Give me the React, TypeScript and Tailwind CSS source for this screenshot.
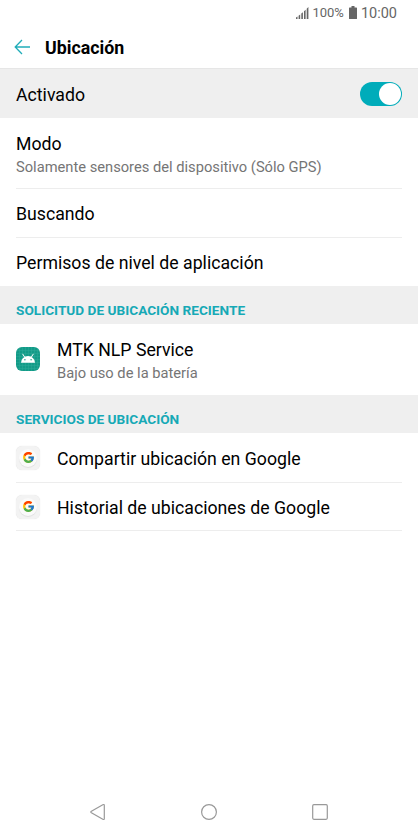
import { useState } from "react";
import type { ReactNode } from "react";
import { FcGoogle } from "react-icons/fc";

function StatusBar() {
  return (
    <div className="flex h-[26px] shrink-0 items-center justify-end pr-[21px] text-[#666]">
      <svg className="mr-[3px]" width="13" height="12" viewBox="0 0 13 12" fill="currentColor">
        <path d="M0 10.5L1.5 9.5V12H0zM2.6 8.8L4.2 7.5V12H2.6zM5.3 6.6L6.9 5.2V12H5.3zM8 4.3L9.6 2.8V12H8zM10.7 1.8L12.4 0V12H10.7z" />
      </svg>
      <span className="pb-[2px] text-[13px] leading-none">100%</span>
      <svg className="mb-px ml-[5px]" width="8" height="13" viewBox="0 0 8 13" fill="currentColor">
        <path d="M2.5 0h3v1.4H7.4a.6.6 0 0 1 .6.6v10.4a.6.6 0 0 1-.6.6H.6a.6.6 0 0 1-.6-.6V2a.6.6 0 0 1 .6-.6h1.9z" />
      </svg>
      <span className="ml-1 pt-[2px] text-[14.5px] leading-none">10:00</span>
    </div>
  );
}

function Section({ title }: { title: string }) {
  return (
    <h2 className="h-[38px] shrink-0 bg-[#efefef] px-4 pt-[14px] text-[13.65px] leading-5 font-bold text-[#16a9b6]">
      {title}
    </h2>
  );
}

type RowProps = {
  title: string;
  subtitle?: string;
  icon?: ReactNode;
  divider?: boolean;
  height?: string;
};

function Row({ title, subtitle, icon, divider, height = "h-[49px]" }: RowProps) {
  return (
    <div className={`mx-4 flex shrink-0 items-center ${height} ${divider ? "border-b border-[#ededed]" : ""}`}>
      {icon && <div className="mr-[17px] w-6">{icon}</div>}
      <div className={subtitle && !icon ? "pt-[3px]" : "pt-[2px]"}>
        <p className="text-[17.7px] leading-6 text-black">{title}</p>
        {subtitle && <p className="mt-px text-[14.7px] leading-5 text-[#757575]">{subtitle}</p>}
      </div>
    </div>
  );
}

function AndroidIcon() {
  return (
    <svg className="mb-px" width="24" height="24" viewBox="0 0 24 24">
      <rect width="24" height="24" rx="6" fill="#129b88" />
      <path
        d="M3.5 1v22M6.5 0v24M9.5 0v24M12.5 0v24M15.5 0v24M18.5 0v24M21.5 1v22M1 3.5h22M0 6.5h24M0 9.5h24M0 12.5h24M0 15.5h24M0 18.5h24M1 21.5h22"
        stroke="#3fb3a3"
        strokeWidth=".5"
        opacity=".6"
      />
      <path d="M5 15.8a7 6.8 0 0 1 14 0z" fill="#fff" />
      <path d="M6.8 7.2l1.8 2.8M17.2 7.2L15.4 10" stroke="#fff" strokeWidth="1" strokeLinecap="round" />
      <circle cx="8.9" cy="12.8" r=".7" fill="#129b88" />
      <circle cx="15.1" cy="12.8" r=".7" fill="#129b88" />
    </svg>
  );
}

function GoogleIcon() {
  return (
    <div className="flex h-6 w-6 items-center justify-center rounded-[6px] bg-[#f3f3f3] shadow-[0_0_1px_rgba(0,0,0,0.15)]">
      <div className="flex h-[18px] w-[18px] items-center justify-center rounded-full bg-[#fafafa] shadow-[0_1px_1px_rgba(0,0,0,0.08)]">
        <FcGoogle size={13} />
      </div>
    </div>
  );
}

function NavBar() {
  return (
    <nav className="mt-auto flex h-[49px] shrink-0 items-center justify-between pr-[90px] pl-[90px] text-[#999]">
      <svg width="16" height="18" viewBox="0 0 16 18" fill="none" stroke="currentColor" strokeWidth="1.2">
        <path d="M1.4 8.2L12.8 1.7q1.5-.7 1.5.9v12.8q0 1.6-1.5.9L1.4 9.8q-1.2-.8 0-1.6z" />
      </svg>
      <svg width="18" height="18" viewBox="0 0 18 18" fill="none" stroke="currentColor" strokeWidth="1.2">
        <circle cx="9" cy="9" r="7.4" />
      </svg>
      <svg width="16" height="18" viewBox="0 0 16 18" fill="none" stroke="currentColor" strokeWidth="1.2">
        <rect x=".7" y="1.7" width="14.6" height="14.6" rx="1.2" />
      </svg>
    </nav>
  );
}

export default function App() {
  const [enabled, setEnabled] = useState(true);

  return (
    <div className="flex h-screen flex-col overflow-hidden bg-white font-['Roboto',sans-serif]">
      <StatusBar />

      <header className="flex h-[43px] shrink-0 items-center border-b border-[#e6e6e6] pl-[14px]">
        <svg width="17" height="16" viewBox="0 0 17 16" fill="none" stroke="#20adb9" strokeWidth="1.3">
          <path d="M16 8H1.5M8 1L1.2 8L8 15" />
        </svg>
        <h1 className="ml-[14px] pt-px text-[17.8px] leading-6 font-bold text-black">Ubicación</h1>
      </header>

      <div className="flex h-[49px] shrink-0 items-center justify-between bg-[#efefef] px-4">
        <span className="pt-[2px] text-[17.7px] leading-6 text-black">Activado</span>
        <button
          role="switch"
          aria-checked={enabled}
          onClick={() => setEnabled(!enabled)}
          className={`flex h-6 w-[42px] items-center rounded-full p-px ${enabled ? "justify-end bg-[#00acba]" : "justify-start bg-gray-400"}`}
        >
          <span className="h-[22px] w-[22px] rounded-full bg-white" />
        </button>
      </div>

      <Row title="Modo" subtitle="Solamente sensores del dispositivo (Sólo GPS)" height="h-[71px]" divider />
      <Row title="Buscando" divider />
      <Row title="Permisos de nivel de aplicación" height="h-12" />

      <Section title="SOLICITUD DE UBICACIÓN RECIENTE" />
      <Row title="MTK NLP Service" subtitle="Bajo uso de la batería" height="h-[71px]" icon={<AndroidIcon />} />

      <Section title="SERVICIOS DE UBICACIÓN" />
      <Row title="Compartir ubicación en Google" icon={<GoogleIcon />} height="h-[50px]" divider />
      <Row title="Historial de ubicaciones de Google" icon={<GoogleIcon />} height="h-12" divider />

      <NavBar />
    </div>
  );
}
